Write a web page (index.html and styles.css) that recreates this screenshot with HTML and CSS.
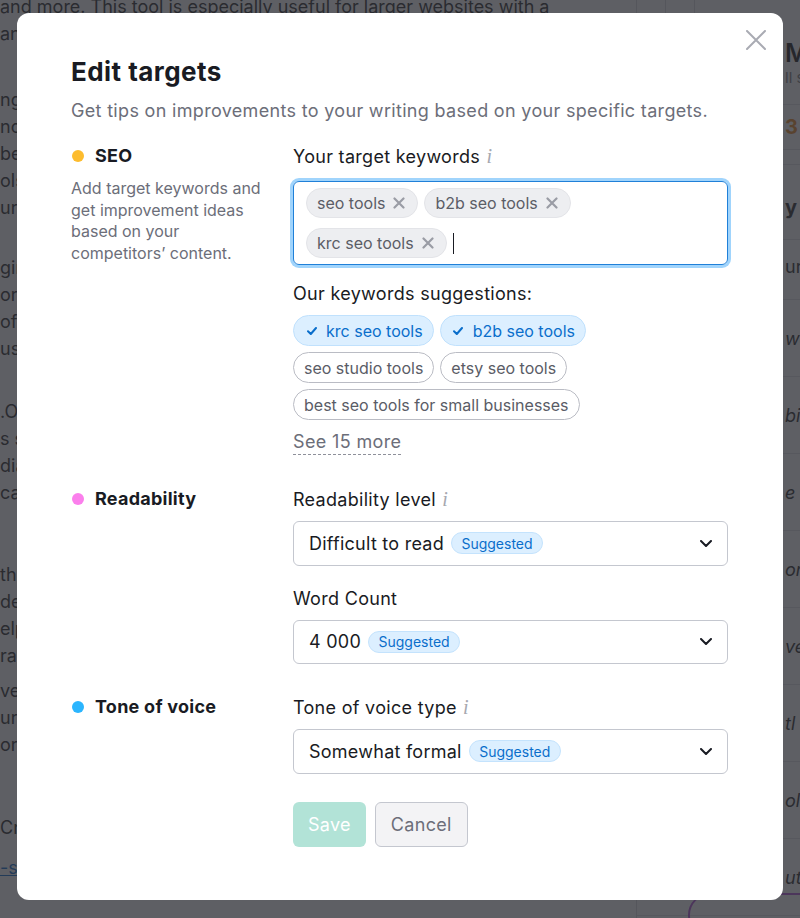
FILE: index.html
```html
<!DOCTYPE html>
<html lang="en">
<head>
<meta charset="utf-8">
<title>Edit targets</title>
<link rel="stylesheet" href="styles.css">
</head>
<body>
<div class="page">
  <main class="article">
    <p class="p1">and more. This tool is especially useful for larger websites with a<br>any number of pages and a complex structure of sections.</p>
    <p class="p2">ng the crawl, you will see a list of issues grouped by<br>nce and priority, so you can decide what to fix first<br> be sure to check the errors before the warnings and<br>ols like this one save hours of manual checking for<br>ur whole team and every project you run.</p>
    <p class="p3">gin with the most critical problems on the site, in<br>order of how many pages they affect, and then move<br>often to the notices that only need a quick look<br>us or your developers when there is time.</p>
    <p class="p4">.O. The report also shows how your pages perform<br> s search results and which ones need work. The<br>dia and other content types are checked too, and<br>can be exported as a PDF or a spreadsheet.</p>
    <p class="p5"> th is the next step: compare the results with your<br> de competitors and look for the gaps that could<br>elp you rank higher for the keywords that<br> ra your audience is searching for.</p>
    <p class="p6">ve done that, set up a schedule so<br>ur audit runs automatically every week and<br>ore problems are caught early.</p>
    <p class="p7">Crawl settings can be changed at any time.</p>
    <p class="p8"><a href="#">-site-audit-guide</a></p>
  </main>
  <aside class="rail">
    <div class="rail-tabs"><span class="rail-tab"></span><span class="rail-tab"></span></div>
    <div class="rail-head">
      <div class="rail-title">My content</div>
      <div class="rail-sub">ll suggestions</div>
    </div>
    <div class="rail-score">3 issues</div>
    <div class="rail-spacer"></div>
    <div class="rail-block"><span class="rail-strong">y</span></div>
    <div class="rail-block short">ur text</div>
    <div class="rail-row">we</div>
    <div class="rail-row">bi</div>
    <div class="rail-row">e K</div>
    <div class="rail-row">on</div>
    <div class="rail-row">ve</div>
    <div class="rail-row">tl</div>
    <div class="rail-row">ol</div>
    <div class="rail-row">ut</div>
  </aside>
</div>
<div class="fab"></div>
<div class="backdrop"></div>

<div class="modal" role="dialog" aria-labelledby="modal-title">
  <button class="close" aria-label="Close">
    <svg width="20" height="20" viewBox="0 0 20 20"><path d="M1 1L19 19M19 1L1 19" stroke="#a9abb3" stroke-width="2" stroke-linecap="round" fill="none"/></svg>
  </button>
  <h1 class="title" id="modal-title">Edit targets</h1>
  <p class="subtitle">Get tips on improvements to your writing based on your specific targets.</p>

  <section class="section">
    <div class="side">
      <div class="heading"><span class="dot dot-seo"></span>SEO</div>
      <p class="desc">Add target keywords and get improvement ideas based on your competitors’ content.</p>
    </div>
    <div class="fields">
      <div class="label">Your target keywords <span class="info">i</span></div>
      <div class="tags-input">
        <span class="tag">seo tools<svg class="tag-x" width="12" height="12" viewBox="0 0 12 12"><path d="M1.5 1.5L10.5 10.5M10.5 1.5L1.5 10.5" stroke="#9a9ca5" stroke-width="2.2" stroke-linecap="round"/></svg></span>
        <span class="tag">b2b seo tools<svg class="tag-x" width="12" height="12" viewBox="0 0 12 12"><path d="M1.5 1.5L10.5 10.5M10.5 1.5L1.5 10.5" stroke="#9a9ca5" stroke-width="2.2" stroke-linecap="round"/></svg></span>
        <span class="tag">krc seo tools<svg class="tag-x" width="12" height="12" viewBox="0 0 12 12"><path d="M1.5 1.5L10.5 10.5M10.5 1.5L1.5 10.5" stroke="#9a9ca5" stroke-width="2.2" stroke-linecap="round"/></svg></span>
        <span class="caret"></span>
      </div>
      <div class="label label-suggest">Our keywords suggestions:</div>
      <div class="chips">
        <span class="chip chip-on"><svg class="check" width="10" height="8" viewBox="0 0 10 8"><path d="M1 4.2L3.8 7L9 1" stroke="#0a6ecb" stroke-width="2" fill="none" stroke-linecap="round" stroke-linejoin="round"/></svg>krc seo tools</span>
        <span class="chip chip-on"><svg class="check" width="10" height="8" viewBox="0 0 10 8"><path d="M1 4.2L3.8 7L9 1" stroke="#0a6ecb" stroke-width="2" fill="none" stroke-linecap="round" stroke-linejoin="round"/></svg>b2b seo tools</span>
        <span class="chip">seo studio tools</span>
        <span class="chip">etsy seo tools</span>
        <span class="chip">best seo tools for small businesses</span>
      </div>
      <a class="more" href="#">See 15 more</a>
    </div>
  </section>

  <section class="section">
    <div class="side">
      <div class="heading"><span class="dot dot-read"></span>Readability</div>
    </div>
    <div class="fields">
      <div class="label">Readability level <span class="info">i</span></div>
      <div class="select">Difficult to read<span class="badge">Suggested</span><svg class="chev" width="12" height="7" viewBox="0 0 12 7"><path d="M1 1L6 6L11 1" stroke="#191b23" stroke-width="2" fill="none" stroke-linecap="round" stroke-linejoin="round"/></svg></div>
      <div class="label label-next">Word Count</div>
      <div class="select">4 000<span class="badge">Suggested</span><svg class="chev" width="12" height="7" viewBox="0 0 12 7"><path d="M1 1L6 6L11 1" stroke="#191b23" stroke-width="2" fill="none" stroke-linecap="round" stroke-linejoin="round"/></svg></div>
    </div>
  </section>

  <section class="section">
    <div class="side">
      <div class="heading"><span class="dot dot-tone"></span>Tone of voice</div>
    </div>
    <div class="fields">
      <div class="label">Tone of voice type <span class="info">i</span></div>
      <div class="select">Somewhat formal<span class="badge">Suggested</span><svg class="chev" width="12" height="7" viewBox="0 0 12 7"><path d="M1 1L6 6L11 1" stroke="#191b23" stroke-width="2" fill="none" stroke-linecap="round" stroke-linejoin="round"/></svg></div>
    </div>
  </section>

  <div class="actions">
    <button class="btn btn-save" disabled>Save</button>
    <button class="btn btn-cancel">Cancel</button>
  </div>
</div>
</body>
</html>
```

FILE: styles.css
```css
* { box-sizing: border-box; }
html, body { margin: 0; padding: 0; }
body {
  width: 800px;
  height: 918px;
  overflow: hidden;
  position: relative;
  background: #fff;
  font-family: Inter, "Noto Sans", "Liberation Sans", sans-serif;
}

/* ---------- background page ---------- */
.page { display: flex; height: 918px; }
.article {
  width: 636px;
  flex: none;
  font-size: 18px;
  line-height: 27px;
  color: #222;
  margin-top: -7px;
  overflow: hidden;
}
.article p { margin: 0; white-space: nowrap; }
.article .p2 { margin-top: 39px; }
.article .p3 { margin-top: 33px; }
.article .p4 { margin-top: 36px; }
.article .p5 { margin-top: 55px; }
.article .p6 { margin-top: 8px; }
.article .p7 { margin-top: 56px; }
.article .p8 { margin-top: 13px; }
.article a { color: #0066cc; }

.rail {
  width: 164px;
  flex: none;
  border-left: 1px solid #d8d8dc;
  display: flex;
  flex-direction: column;
  overflow: hidden;
  white-space: nowrap;
}
.rail-tabs { height: 28px; display: flex; flex: none; }
.rail-tab { width: 29px; border-right: 1px solid #d8d8dc; }
.rail-head {
  height: 77px; flex: none;
  padding: 10px 0 0 148px;
  border-bottom: 1px solid #e2e2e6;
}
.rail-title { font-size: 25px; line-height: 30px; font-weight: 600; color: #111; }
.rail-sub { font-size: 15px; line-height: 20px; color: #777; }
.rail-score {
  height: 45px; flex: none;
  padding-left: 148px;
  font-size: 20px; line-height: 45px; font-weight: 700; color: #e8861c;
  border-bottom: 1px solid #e2e2e6;
}
.rail-spacer { height: 15px; flex: none; border-bottom: 1px solid #e2e2e6; }
.rail-block {
  height: 75px; flex: none;
  padding: 30px 0 0 148px;
  border-bottom: 1px solid #e2e2e6;
  font-size: 18px; line-height: 24px; color: #222;
}
.rail-block.short { height: 60px; padding-top: 15px; }
.rail-strong { font-weight: 700; font-size: 20px; }
.rail-row {
  height: 77px; flex: none;
  padding-left: 148px;
  display: flex; align-items: center;
  font-size: 18px; font-style: italic; color: #222;
  border-bottom: 1px solid #e2e2e6;
}
.fab {
  position: absolute;
  left: 688px; top: 893px;
  width: 140px; height: 44px;
  border: 2px solid #b24fd6;
  border-radius: 22px;
}

.backdrop {
  position: fixed;
  inset: 0;
  background: rgba(46, 47, 53, 0.77);
}

/* ---------- modal ---------- */
.modal {
  position: absolute;
  left: 17px;
  top: 13px;
  width: 766px;
  background: #fff;
  border-radius: 12px;
  padding: 43px 54px 53px;
  color: #191b23;
}
.close {
  position: absolute;
  top: 17px;
  right: 17px;
  width: 20px; height: 20px;
  padding: 0; margin: 0;
  border: 0; background: none;
  display: block;
}
.close svg { display: block; }
.title {
  margin: 0;
  font-size: 26px;
  line-height: 32px;
  font-weight: 700;
  letter-spacing: 0.45px;
  color: #191b23;
}
.subtitle {
  margin: 11px 0 0;
  font-size: 18px;
  line-height: 24px;
  letter-spacing: 0.32px;
  color: #6c6e79;
}

.section {
  display: grid;
  grid-template-columns: 200px 435px;
  column-gap: 22px;
  margin-top: 31px;
}
.subtitle + .section { margin-top: 21px; }

.heading {
  display: flex;
  align-items: center;
  font-size: 18px;
  line-height: 24px;
  font-weight: 700;
  letter-spacing: 0.25px;
  color: #191b23;
}
.dot {
  width: 12px; height: 12px;
  border-radius: 50%;
  margin: 0 11px 0 1px;
  flex: none;
}
.dot-seo { background: #fdbc2e; }
.dot-read { background: #fb7fec; }
.dot-tone { background: #2bb5fe; }
.desc {
  margin: 10px 0 0;
  font-size: 16px;
  line-height: 21.5px;
  color: #6c6e79;
}

.fields { display: flex; flex-direction: column; align-items: flex-start; }
.label {
  font-size: 18px;
  line-height: 24px;
  letter-spacing: 0.3px;
  color: #191b23;
}
.info {
  font-family: "Liberation Serif", "DejaVu Serif", serif;
  font-style: italic;
  font-size: 20px;
  color: #a6a8b0;
  margin-left: 1px;
}

.tags-input {
  align-self: stretch;
  margin-top: 12px;
  min-height: 84px;
  display: flex;
  flex-wrap: wrap;
  align-items: center;
  align-content: flex-start;
  gap: 10px 6px;
  padding: 6px 12px;
  border: 1px solid #2080d8;
  border-radius: 6px;
  box-shadow: 0 0 0 3px #a0d4fc;
}
.tag {
  height: 30px;
  display: inline-flex;
  align-items: center;
  padding: 0 12px 0 10px;
  border-radius: 15px;
  background: #edeef1;
  border: 1px solid #e3e4e8;
  font-size: 16px;
  color: #5b5d66;
}
.tag-x { margin-left: 8px; display: block; }
.caret {
  width: 1.5px;
  height: 21px;
  background: #191b23;
}

.label-suggest { margin-top: 17px; }
.chips {
  margin-top: 9px;
  display: flex;
  flex-wrap: wrap;
  gap: 6px;
}
.chip {
  height: 31px;
  display: inline-flex;
  align-items: center;
  padding: 0 10px;
  border-radius: 16px;
  border: 1px solid #babcc4;
  background: #fff;
  font-size: 16px;
  color: #5a5c66;
}
.chip-on {
  padding-left: 12.5px;
  background: #dcefff;
  border-color: #c0e1fd;
  color: #0a6ecb;
}
.check { margin-right: 9.5px; display: block; }

.more {
  margin-top: 10px;
  margin-bottom: 1px;
  font-size: 18px;
  line-height: 24px;
  letter-spacing: 0.35px;
  color: #6c6e79;
  text-decoration: none;
  border-bottom: 1px dashed #8e909a;
}

.select {
  align-self: stretch;
  margin-top: 9px;
  height: 44.5px;
  display: flex;
  align-items: center;
  padding: 0 15px;
  border: 1px solid #c4c7cf;
  border-radius: 6px;
  font-size: 18px;
  letter-spacing: 0.25px;
  color: #191b23;
}
.badge {
  margin-left: 7px;
  height: 22px;
  display: inline-flex;
  align-items: center;
  padding: 0 9.5px;
  border-radius: 11px;
  background: #dcefff;
  border: 1px solid #c4e3fd;
  font-size: 14px;
  letter-spacing: 0;
  color: #0a6ecb;
}
.chev { margin-left: auto; display: block; }
.label-next { margin-top: 21px; }

.actions {
  margin: 28px 0 0 222px;
  display: flex;
  gap: 9px;
}
.btn {
  height: 45px;
  padding: 0 15px;
  border-radius: 6px;
  font-family: inherit;
  font-size: 18px;
  letter-spacing: 0.3px;
}
.btn-save {
  border: 0;
  padding: 0 15px;
  background: #b2e3d7;
  color: #fff;
}
.btn-cancel {
  border: 1px solid #c4c7cf;
  background: #f3f3f5;
  color: #6c6e79;
}
```
